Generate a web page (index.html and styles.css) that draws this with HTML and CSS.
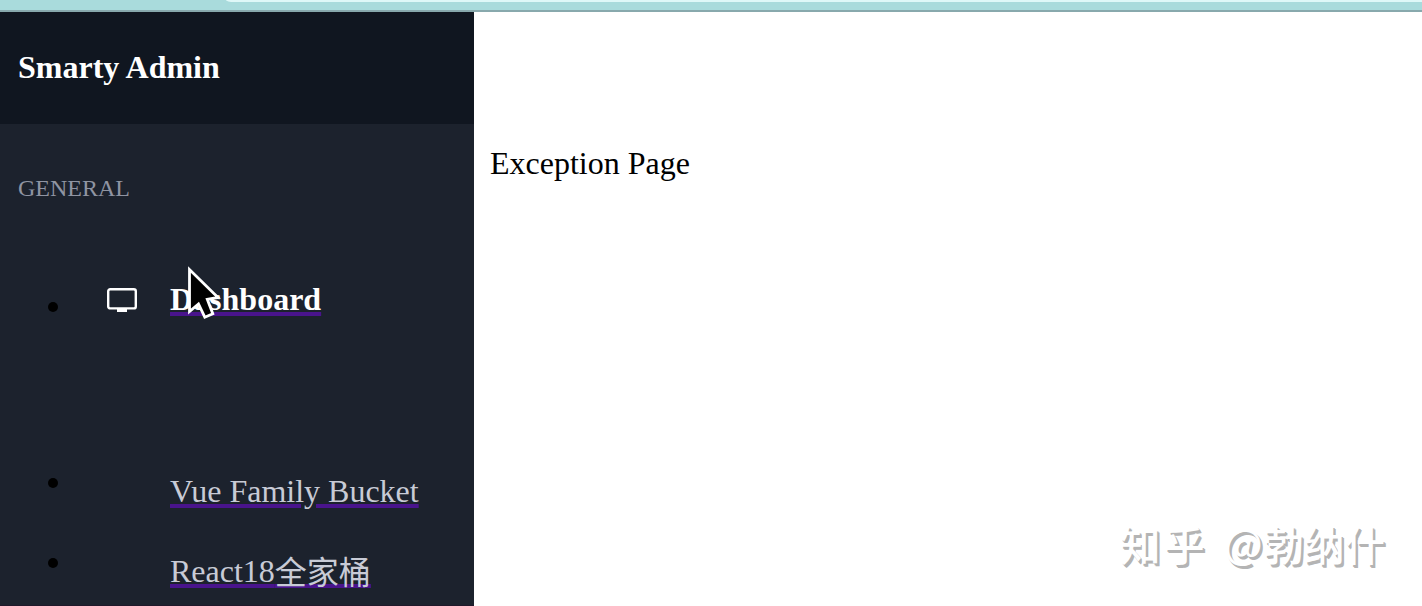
FILE: index.html
```html
<!DOCTYPE html>
<html lang="zh">
<head>
<meta charset="utf-8">
<title>Smarty Admin</title>
<link rel="stylesheet" href="styles.css">
</head>
<body>
<div class="browser-bar"><div class="address"></div></div>
<div class="layout">
  <aside class="sidebar">
    <header class="brand">Smarty Admin</header>
    <div class="group">GENERAL</div>
    <ul class="menu">
      <li class="item active"><span class="dot"></span>
        <svg class="icon" width="30" height="24" viewBox="0 0 30 24"><rect x="1.2" y="1.2" width="27.6" height="19.2" rx="2" fill="none" stroke="#fff" stroke-width="2.4"/><path d="M10 20h10v4H10z" fill="#fff"/></svg>
        <a class="link">Dashboard</a></li>
      <li class="item"><span class="dot"></span><a class="link">Vue Family Bucket</a></li>
      <li class="item last"><span class="dot"></span><a class="link">React18<span class="han">全家桶</span></a></li>
    </ul>
    <div class="edge"></div>
  </aside>
  <main class="content">Exception Page</main>
</div>
<svg class="cursor" width="38" height="58" viewBox="0 0 38 58"><path d="M3.5 3.5V45.5L12.5 38L18.8 51.2L26.8 47.8L21.3 33.3L32 31.5Z" fill="#000" stroke="#fff" stroke-width="2.8"/></svg>
<div class="watermark"><span class="site">知乎</span> <span class="at">@</span>勃纳什</div>
</body>
</html>
```
FILE: styles.css
```css
* { box-sizing: border-box; }
body {
  margin: 0;
  height: 606px;
  overflow: hidden;
  display: flex;
  flex-direction: column;
  background: #fff;
  font: 32px/36px "Liberation Serif", "Noto Sans CJK SC", serif;
}
.browser-bar {
  flex: none;
  height: 12px;
  padding-left: 226px;
  background: #a9dbdc;
  border-bottom: 2px solid #88a9ad;
}
.address {
  height: 2px;
  background: #dff8f8;
  border-bottom-left-radius: 8px 2px;
}
.layout { flex: 1; display: flex; min-height: 0; }
.sidebar {
  width: 474px;
  display: flex;
  flex-direction: column;
  background: #1c222d;
}
.brand {
  flex: none;
  height: 112px;
  padding: 37px 18px 0;
  background: #101620;
  color: #fff;
  font-weight: bold;
}
.group {
  padding: 50px 18px 0;
  font-size: 24px;
  line-height: 28px;
  color: #8f94a2;
}
.menu {
  margin: 0;
  padding: 79px 0 0 48px;
  list-style: none;
}
.item {
  display: flex;
  height: 80px;
  color: #c8cbd6;
}
.item.active { height: 192px; color: #fff; font-weight: bold; }
.item.last { height: 50px; }
.dot {
  flex: none;
  width: 10px;
  height: 10px;
  margin: 5px 112px 0 0;
  border-radius: 50%;
  background: #000;
}
.active .dot { margin: 21px 49px 0 0; }
.icon { flex: none; margin: 7px 33px 0 0; }
.link {
  height: 36px;
  white-space: nowrap;
  text-decoration: underline #49148c 4px;
  text-underline-offset: 2px;
}
.han { line-height: 1; vertical-align: -2px; }
.edge { flex: none; margin-top: auto; height: 1px; background: #20182a; }
.content { flex: 1; padding: 133px 16px 0; color: #000; }
.cursor { position: absolute; left: 186px; top: 266px; }
.watermark {
  position: absolute;
  left: 1120px;
  top: 517px;
  font: 500 40.5px/54px "Noto Sans CJK SC", sans-serif;
  color: #fff;
  text-shadow: 1.5px 1.5px 0 #b4b4b4, 2.5px 2.5px 0 #b4b4b4;
  word-spacing: 7px;
  white-space: nowrap;
}
.site { letter-spacing: 3.5px; }
.at { vertical-align: 2px; line-height: 1; font-weight: 400; margin-right: 1px; }
```
